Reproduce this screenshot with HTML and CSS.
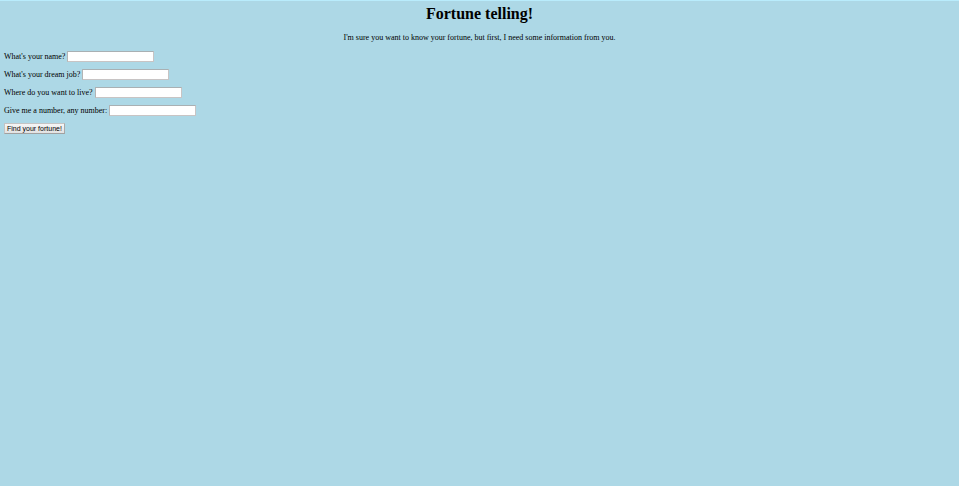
FILE: index.html
```html
<!DOCTYPE html>
<html lang="en">
<head>
<meta charset="utf-8">
<title>Fortune telling!</title>
<link rel="stylesheet" href="styles.css">
</head>
<body>
<header class="intro">
<h1 class="title">Fortune telling!</h1>
<p class="lead">I'm sure you want to know your fortune, but first, I need some information from you.</p>
</header>
<form class="questions">
<div class="question"><label for="name">What's your name?</label><input class="answer" id="name" type="text"></div>
<div class="question"><label for="job">What's your dream job?</label><input class="answer" id="job" type="text"></div>
<div class="question"><label for="place">Where do you want to live?</label><input class="answer" id="place" type="text"></div>
<div class="question"><label for="number">Give me a number, any number:</label><input class="answer" id="number" type="text"></div>
<button class="submit" type="button">Find your fortune!</button>
</form>
</body>
</html>
```

FILE: styles.css
```css
html {
  background: #add8e6;
}

body {
  margin: 0;
  padding: 4px 4px 5px;
  border-top: 1px solid #b9ecfc;
  color: #000;
  font: 8px/11px "Liberation Serif", serif;
}

.intro {
  text-align: center;
}

.title {
  margin: 0 0 10px;
  font-size: 16px;
  line-height: 17px;
}

.lead {
  margin: 0 0 8px;
}

.questions {
  display: flex;
  flex-direction: column;
  align-items: flex-start;
  gap: 7px;
}

.question {
  display: flex;
  align-items: center;
  gap: 2px;
}

.answer {
  box-sizing: border-box;
  width: 87px;
  height: 11px;
  padding: 0 1px;
  border: 1px solid;
  border-color: #a9b0b3 #c8c4c4 #c8c4c4 #b4b4b4;
  background: #fff;
  font: 7px/9px "Liberation Sans", sans-serif;
}

.submit {
  height: 11px;
  padding: 0 2px;
  border: 1px solid;
  border-color: #c4c4c4 #a8a8a8 #a0a0a0 #c4c4c4;
  background: linear-gradient(#f6f6f6, #e2e2e2);
  color: #000;
  font: 7px/9px "Liberation Sans", sans-serif;
}
```
